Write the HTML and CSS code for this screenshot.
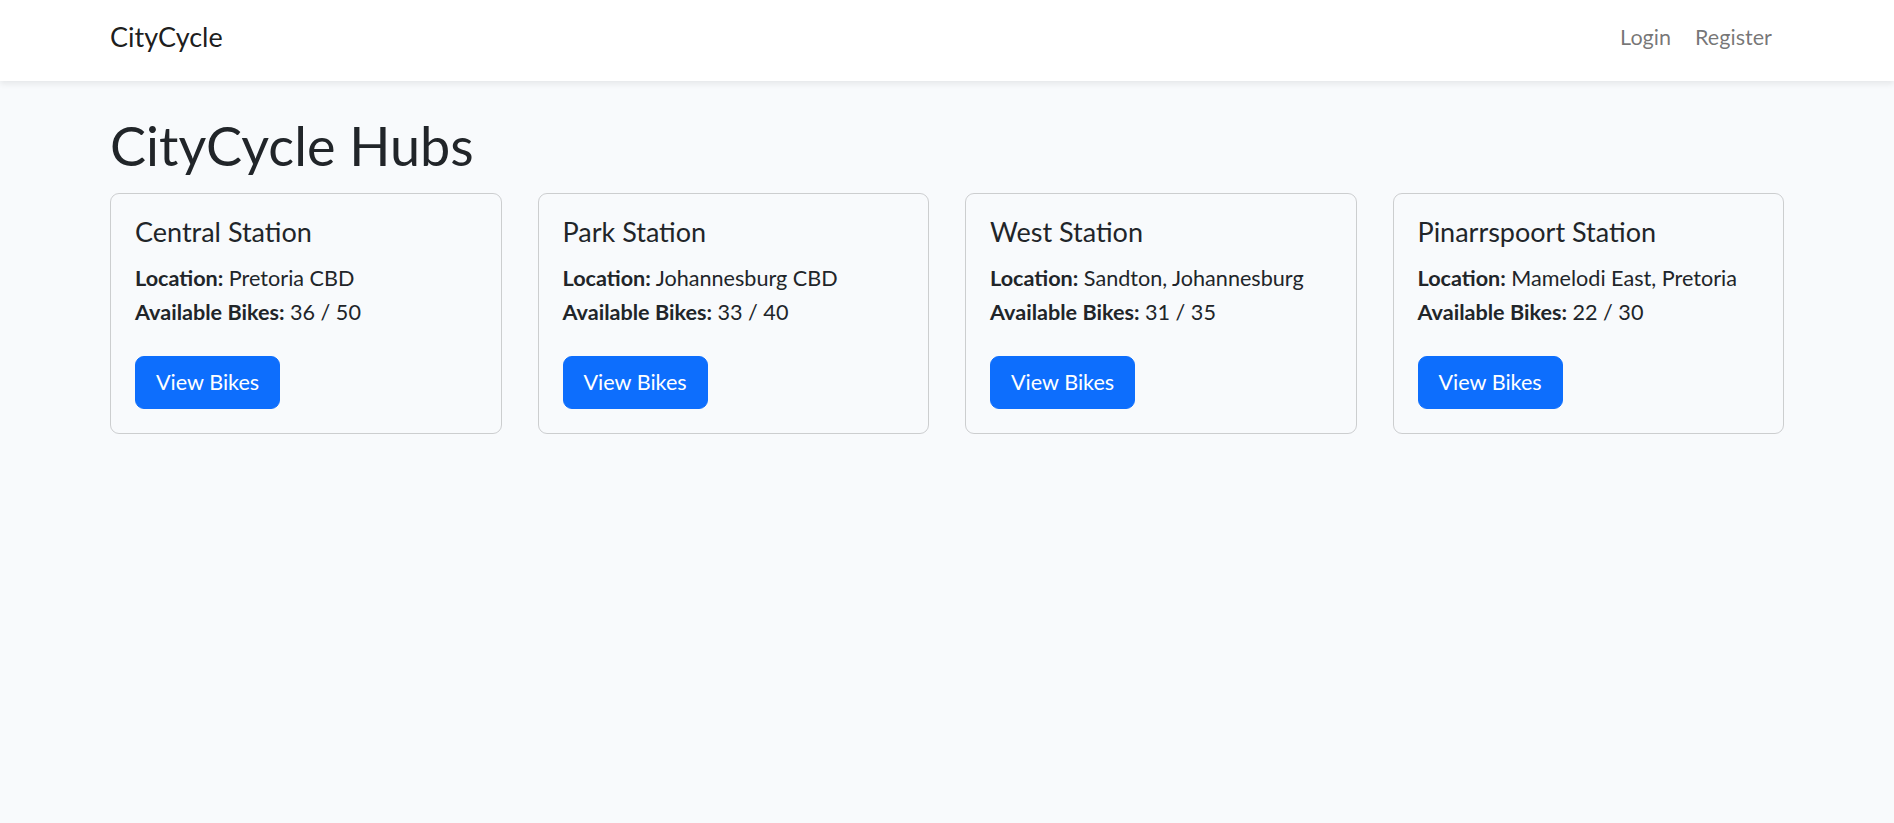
FILE: index.html
```html
<!DOCTYPE html>
<html lang="en">
<head>
<meta charset="utf-8">
<title>CityCycle</title>
<link rel="stylesheet" href="styles.css">
</head>
<body>
<nav class="navbar">
  <div class="container nav-inner">
    <a class="brand" href="#">CityCycle</a>
    <ul class="nav-links">
      <li><a class="nav-link" href="#">Login</a></li>
      <li><a class="nav-link" href="#">Register</a></li>
    </ul>
  </div>
</nav>
<main class="main">
  <div class="container">
    <h1 class="page-title">CityCycle Hubs</h1>
    <div class="hub-grid">
      <div class="card">
        <h5 class="card-title">Central Station</h5>
        <p class="card-text"><strong>Location:</strong> Pretoria CBD<br><strong>Available Bikes:</strong> 36 / 50</p>
        <a class="btn" href="#">View Bikes</a>
      </div>
      <div class="card">
        <h5 class="card-title">Park Station</h5>
        <p class="card-text"><strong>Location:</strong> Johannesburg CBD<br><strong>Available Bikes:</strong> 33 / 40</p>
        <a class="btn" href="#">View Bikes</a>
      </div>
      <div class="card">
        <h5 class="card-title">West Station</h5>
        <p class="card-text"><strong>Location:</strong> Sandton, Johannesburg<br><strong>Available Bikes:</strong> 31 / 35</p>
        <a class="btn" href="#">View Bikes</a>
      </div>
      <div class="card">
        <h5 class="card-title">Pinarrspoort Station</h5>
        <p class="card-text"><strong>Location:</strong> Mamelodi East, Pretoria<br><strong>Available Bikes:</strong> 22 / 30</p>
        <a class="btn" href="#">View Bikes</a>
      </div>
    </div>
  </div>
</main>
</body>
</html>
```
FILE: styles.css
```css
* { box-sizing: border-box; }
html, body { margin: 0; padding: 0; }
body {
  font-family: Lato, "Open Sans", "Noto Sans", sans-serif;
  font-size: 21.6px;
  line-height: 1.5;
  color: #212529;
  background: #f8fafc;
  min-height: 823px;
}
.container {
  max-width: 1710px;
  margin: 0 auto;
  padding: 0 18px;
}
.navbar {
  background: #fff;
  padding: 12px 0;
  box-shadow: 0 3px 6px rgba(0, 0, 0, 0.075);
}
.nav-inner {
  display: flex;
  align-items: center;
  justify-content: space-between;
}
.brand {
  font-size: 27px;
  line-height: 40.5px;
  padding: 5px 0 11px;
  color: rgba(0, 0, 0, 0.9);
  text-decoration: none;
}
.nav-links {
  list-style: none;
  margin: 0;
  padding: 0;
  display: flex;
}
.nav-link {
  display: block;
  padding: 9px 12px 15px;
  color: rgba(0, 0, 0, 0.55);
  text-decoration: none;
}
.main {
  padding: 36px 0;
}
.page-title {
  font-size: 54px;
  font-weight: 400;
  line-height: 58.8px;
  margin: 0 0 18px;
}
.hub-grid {
  display: grid;
  grid-template-columns: repeat(4, 1fr);
  gap: 36px;
}
.card {
  border: 1.5px solid rgba(0, 0, 0, 0.175);
  border-radius: 9px;
  padding: 24px;
}
.card-title {
  font-size: 27px;
  font-weight: 400;
  line-height: 28px;
  margin: 0 0 16px;
}
.card-text {
  line-height: 33.6px;
  margin: 0 0 27px;
}
.card-text strong { font-weight: 700; }
.btn {
  display: inline-block;
  padding: 9px 20px;
  border: 1.5px solid #0d6efd;
  border-radius: 9px;
  background: #0d6efd;
  color: #fff;
  text-decoration: none;
  line-height: 1.5;
}
```
